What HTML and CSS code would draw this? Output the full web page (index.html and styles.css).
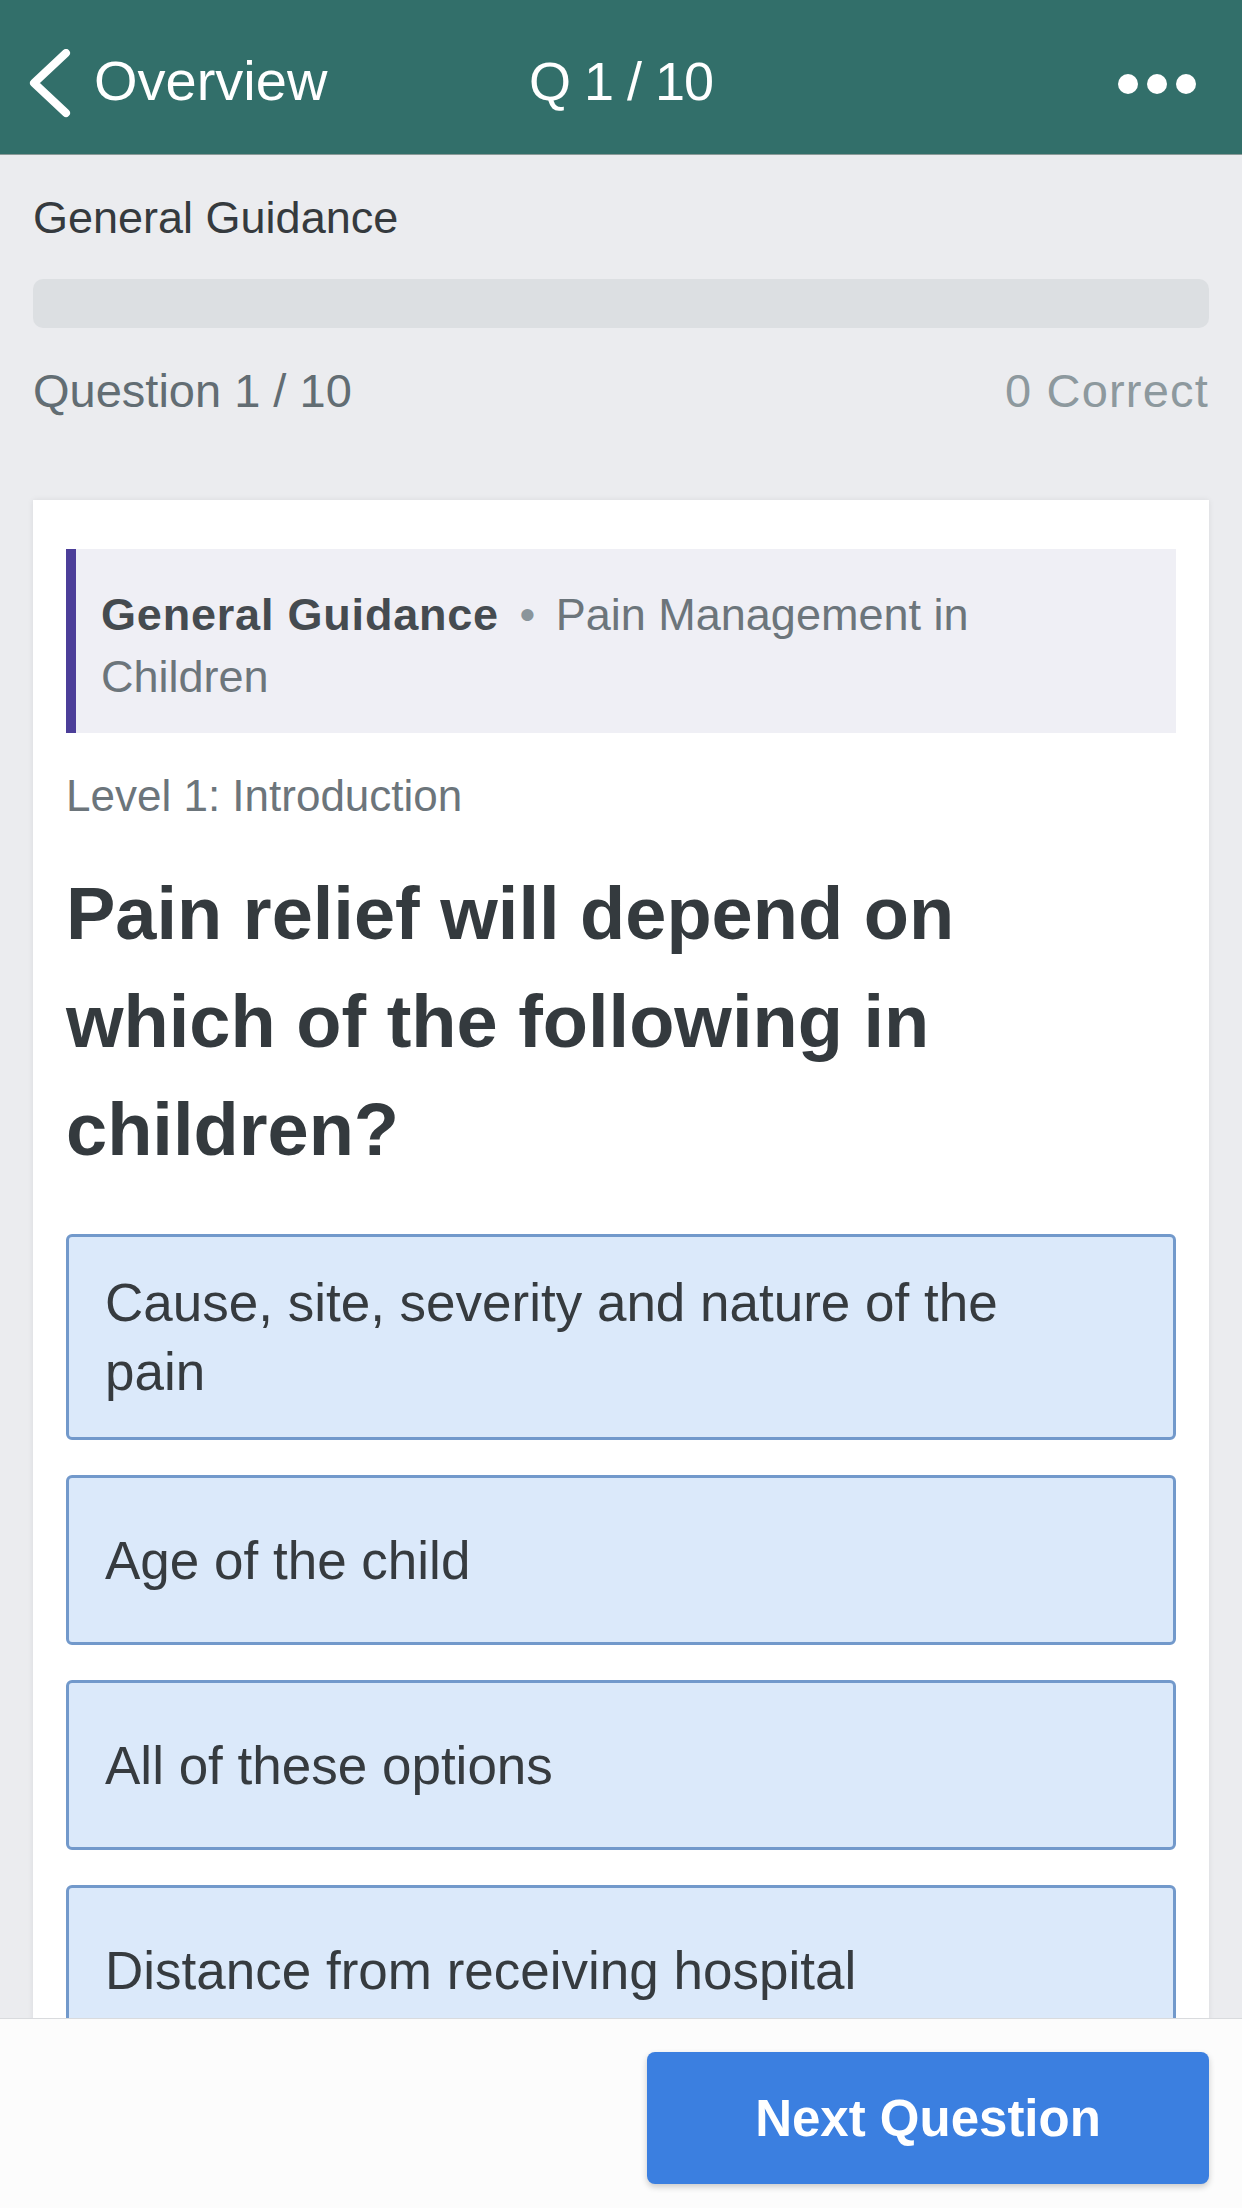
FILE: index.html
```html
<!DOCTYPE html>
<html lang="en">
<head>
<meta charset="utf-8">
<title>Q 1 / 10</title>
<link rel="stylesheet" href="styles.css">
</head>
<body>
<div class="app">
  <header class="navbar">
    <div class="nav-back">
      <svg class="chevron" width="44" height="70" viewBox="0 0 44 70" aria-hidden="true">
        <polyline points="38,4 6,34 38,64" fill="none" stroke="#ffffff" stroke-width="8" stroke-linecap="round" stroke-linejoin="round"/>
      </svg>
      <span class="nav-back-label">Overview</span>
    </div>
    <div class="nav-title">Q 1 / 10</div>
    <div class="nav-more" aria-label="More">
      <span class="dot"></span><span class="dot"></span><span class="dot"></span>
    </div>
  </header>

  <main class="content">
    <div class="section-title">General Guidance</div>
    <div class="progress"><div class="progress-fill"></div></div>
    <div class="stats">
      <span class="stats-count">Question 1 / 10</span>
      <span class="stats-correct">0 Correct</span>
    </div>

    <section class="card">
      <div class="topic"><strong class="topic-main">General Guidance</strong> <span class="topic-sep">•</span> Pain Management in Children</div>
      <div class="level">Level 1: Introduction</div>
      <h1 class="question">Pain relief will depend on which of the following in children?</h1>
      <div class="options">
        <div class="option">Cause, site, severity and nature of the pain</div>
        <div class="option">Age of the child</div>
        <div class="option">All of these options</div>
        <div class="option">Distance from receiving hospital</div>
      </div>
    </section>
  </main>

  <footer class="footer">
    <button class="next-btn" type="button">Next Question</button>
  </footer>
</div>
</body>
</html>
```

FILE: styles.css
```css
* {
  box-sizing: border-box;
}

html, body {
  margin: 0;
  padding: 0;
}

body {
  font-family: "Liberation Sans", Arial, sans-serif;
  background: #ebecef;
  color: #353a3e;
}

.app {
  width: 1242px;
  height: 2208px;
  display: flex;
  flex-direction: column;
  overflow: hidden;
}

/* Header */
.navbar {
  flex: 0 0 155px;
  height: 155px;
  background: #326f6a;
  border-bottom: 1px solid #8a9a98;
  display: grid;
  grid-template-columns: 1fr auto 1fr;
  align-items: center;
  padding: 8px 37px 0 37px;
  color: #ffffff;
}

.nav-back {
  display: flex;
  align-items: center;
  gap: 22px;
  margin-left: -9px;
}

.chevron {
  display: block;
  margin-top: 5px;
}

.nav-back-label {
  font-size: 56px;
  line-height: 66px;
}

.nav-title {
  font-size: 54px;
  line-height: 66px;
  letter-spacing: -1px;
  text-align: center;
}

.nav-more {
  display: flex;
  justify-content: flex-end;
  gap: 9px;
  margin-top: 6px;
  margin-right: 9px;
}

.dot {
  width: 20px;
  height: 20px;
  border-radius: 50%;
  background: #ffffff;
}

/* Content */
.content {
  flex: 1 1 auto;
  overflow: hidden;
  padding: 36px 33px 0;
}

.section-title {
  font-size: 45px;
  line-height: 54px;
  color: #353a3e;
}

.progress {
  margin-top: 34px;
  height: 49px;
  border-radius: 10px;
  background: #dcdfe2;
  overflow: hidden;
}

.progress-fill {
  width: 0;
  height: 100%;
}

.stats {
  margin-top: 36px;
  display: flex;
  justify-content: space-between;
  font-size: 47px;
  line-height: 54px;
}

.stats-count {
  color: #626d73;
}

.stats-correct {
  color: #8d999e;
  letter-spacing: 1.2px;
}

/* Card */
.card {
  margin-top: 82px;
  background: #ffffff;
  box-shadow: 0 0 6px rgba(0, 0, 0, 0.08);
  padding: 49px 33px 60px;
}

.topic {
  background: #efeff5;
  border-left: 10px solid #4c3e99;
  padding: 35px 90px 25px 25px;
  font-size: 45px;
  line-height: 62px;
  color: #6c757b;
}

.topic-main {
  color: #454b50;
  font-weight: bold;
  letter-spacing: 0.8px;
}

.topic-sep {
  color: #8a959b;
  margin: 0 8px;
}

.level {
  margin-top: 37px;
  font-size: 44px;
  line-height: 52px;
  color: #6c757b;
}

.question {
  margin: 38px 0 0;
  max-width: 1060px;
  font-size: 74px;
  line-height: 108px;
  font-weight: bold;
  color: #343a3e;
}

.options {
  margin-top: 50px;
  display: flex;
  flex-direction: column;
  gap: 35px;
}

.option {
  min-height: 170px;
  display: flex;
  align-items: center;
  padding: 31px 70px 31px 36px;
  background: #dbe9fa;
  border: 3px solid #7299cb;
  border-radius: 6px;
  font-size: 53px;
  line-height: 69px;
  color: #363b3f;
}

/* Footer */
.footer {
  flex: 0 0 190px;
  background: #fcfcfc;
  border-top: 1px solid #d9dbde;
  display: flex;
  justify-content: flex-end;
  align-items: flex-start;
  padding: 33px 33px 0;
}

.next-btn {
  width: 562px;
  height: 132px;
  border: none;
  border-radius: 8px;
  background: #3b7fe0;
  color: #ffffff;
  font-family: "Liberation Sans", Arial, sans-serif;
  font-size: 51px;
  font-weight: bold;
  box-shadow: 0 3px 6px rgba(0, 0, 0, 0.2);
  cursor: pointer;
}
```
